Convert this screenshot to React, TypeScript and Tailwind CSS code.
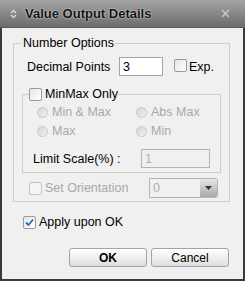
import { useState } from "react";

const font = "font-['Liberation_Sans',Arial,sans-serif]";

function Box({ checked, disabled }: { checked?: boolean; disabled?: boolean }) {
  return (
    <span
      className={`inline-flex items-center justify-center w-[13px] h-[13px] shrink-0 rounded-[2px] border ${
        disabled ? "border-[#c4c4c4] bg-[#f4f4f4]" : "border-[#9a9a9a] bg-gradient-to-br from-[#e6e6e6] to-white"
      }`}
    >
      {checked && (
        <svg width="9" height="9" viewBox="0 0 9 9">
          <path d="M1 4.5 L3.5 7 L8 1.5" stroke="#2a66c9" strokeWidth="1.8" fill="none" />
        </svg>
      )}
    </span>
  );
}

function Radio({ label }: { label: string }) {
  return (
    <div className="flex items-center gap-[4px] h-[14px]">
      <span className="w-[11px] h-[11px] rounded-full border border-[#c8c8c8] bg-gradient-to-br from-[#d4d4d4] to-[#f2f2f2]" />
      <span className="text-[#a8a8a8]">{label}</span>
    </div>
  );
}

export default function App() {
  const [decimals, setDecimals] = useState("3");
  const [apply, setApply] = useState(true);

  return (
    <div className={`w-[245px] h-[281px] flex flex-col bg-[#f0f0f0] text-[12.5px] leading-[14px] text-black ${font}`}>
      <div className="h-[28px] shrink-0 flex items-center bg-gradient-to-b from-[#a4a4a4] to-[#6c6c6c] border-b border-[#5a5a5a]">
        <svg width="7" height="10" viewBox="0 0 7 10" className="ml-[10px]">
          <path d="M1 4 L3.5 1.5 L6 4 M1 6 L3.5 8.5 L6 6" stroke="#d8d8d8" strokeWidth="1.4" fill="none" />
        </svg>
        <span className="ml-[8px] font-bold text-[13px] text-[#111] [text-shadow:0_0_2px_#fff]">
          Value Output Details
        </span>
        <svg width="9" height="9" viewBox="0 0 9 9" className="ml-auto mr-[15px]">
          <path d="M1 1 L8 8 M8 1 L1 8" stroke="#c6c6c6" strokeWidth="1.6" />
        </svg>
      </div>

      <div className="flex-1 flex flex-col border-x-2 border-b-2 border-[#3a3a3a]">
        <fieldset className="ml-[11px] mt-[8px] w-[217px] border border-[#d0d0bf] p-0 pb-[3px]">
          <legend className="ml-[8px] px-[1px]">Number Options</legend>

          <div className="flex items-center mt-[7px] ml-[13px]">
            <span className="w-[92px]">Decimal Points</span>
            <input
              value={decimals}
              onChange={(e) => setDecimals(e.target.value)}
              className="w-[44px] h-[19px] border border-[#a5a5a5] bg-white px-[3px] outline-none"
            />
            <span className="ml-[11px]">
              <Box />
            </span>
            <span className="ml-[2px]">Exp.</span>
          </div>

          <fieldset className="ml-[8px] mt-[11px] w-[199px] border border-[#d0d0bf] p-0 pb-[4px]">
            <legend className="ml-[6px] flex items-center gap-[3px]">
              <Box />
              <span>MinMax Only</span>
            </legend>
            <div className="grid grid-cols-[99px_1fr] gap-y-[5px] mt-[4px] ml-[14px]">
              <Radio label="Min & Max" />
              <Radio label="Abs Max" />
              <Radio label="Max" />
              <Radio label="Min" />
            </div>
            <div className="flex items-center mt-[11px] ml-[10px]">
              <span className="w-[108px]">Limit Scale(%) :</span>
              <div className="w-[69px] h-[19px] border border-[#b4b4b4] px-[3px] text-[#b0b0b0] flex items-center">
                1
              </div>
            </div>
          </fieldset>

          <div className="flex items-center mt-[5px] ml-[15px]">
            <Box disabled />
            <span className="ml-[3px] w-[104px] text-[#a8a8a8]">Set Orientation</span>
            <div className="flex w-[69px] h-[20px] border border-[#b4b4b4] rounded-r-[3px]">
              <span className="flex-1 flex items-center px-[3px] text-[#b0b0b0]">0</span>
              <span className="w-[17px] flex items-center justify-center bg-gradient-to-b from-[#e8e8e8] to-[#a8a8a8] rounded-r-[2px]">
                <svg width="7" height="4" viewBox="0 0 7 4">
                  <path d="M0 0 L7 0 L3.5 4 Z" fill="#333" />
                </svg>
              </span>
            </div>
          </div>
        </fieldset>

        <label className="flex items-center mt-[13px] ml-[21px] w-fit" onClick={() => setApply(!apply)}>
          <Box checked={apply} />
          <span className="ml-[3px]">Apply upon OK</span>
        </label>

        <div className="flex gap-[4px] mt-[19px] ml-[67px]">
          <button className="w-[78px] h-[19px] rounded-[3px] border border-[#a3a3a3] bg-gradient-to-b from-white to-[#dedede] font-bold text-[12px]">
            OK
          </button>
          <button className="w-[78px] h-[19px] rounded-[3px] border border-[#a3a3a3] bg-gradient-to-b from-white to-[#dedede] text-[12px]">
            Cancel
          </button>
        </div>
      </div>
    </div>
  );
}
